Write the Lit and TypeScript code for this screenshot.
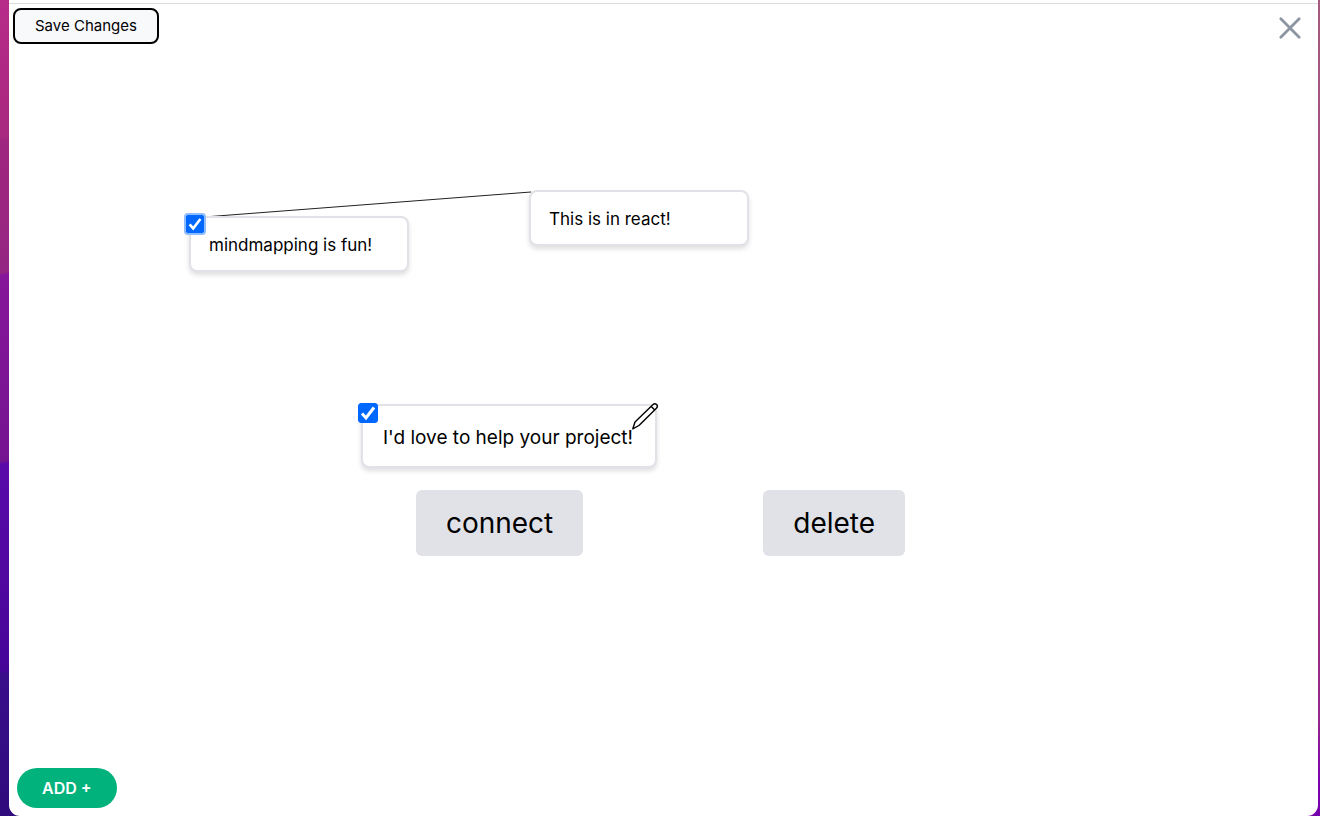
import { LitElement, html, svg, css } from "lit";
import { customElement, property, state } from "lit/decorators.js";
import { styleMap } from "lit/directives/style-map.js";
import { classMap } from "lit/directives/class-map.js";

interface MapNode {
  id: number;
  text: string;
  x: number;
  y: number;
  selected: boolean;
  focused?: boolean;
  large?: boolean;
}

@customElement("map-node")
export class MapNodeCard extends LitElement {
  @property({ attribute: false }) node!: MapNode;

  static styles = css`
    :host {
      display: block;
    }
    .card {
      position: relative;
      box-sizing: border-box;
      min-width: 220px;
      padding: 17px 18px 15px;
      border: 2px solid #e1e2e8;
      border-radius: 8px;
      background: #fff;
      box-shadow: 0 3px 5px rgba(0, 0, 0, 0.13);
      font-size: 17px;
      line-height: 20px;
      color: #000;
      white-space: nowrap;
    }
    .card.large {
      min-width: 296px;
      padding: 20px 20px 16px;
      font-size: 19px;
      line-height: 24px;
    }
    .text {
      margin: 0;
    }
    .tick {
      position: absolute;
      top: -3px;
      left: -5px;
      display: grid;
      width: 18px;
      height: 18px;
    }
    .large .tick {
      width: 20px;
      height: 20px;
    }
    .tick > * {
      grid-area: 1 / 1;
      width: 100%;
      height: 100%;
    }
    .box {
      appearance: none;
      margin: 0;
      border: 1px solid #767676;
      border-radius: 3px;
      background: #fff;
    }
    .box:checked {
      border-color: #0068ff;
      background: #0068ff;
    }
    .box.focused {
      border-radius: 2px;
      box-shadow: 0 0 0 2px #8fbcfb;
    }
    .check {
      pointer-events: none;
    }
    .edit {
      position: absolute;
      top: -4px;
      right: -4px;
      width: 28px;
      height: 28px;
      padding: 0;
      border: 0;
      background: none;
      cursor: pointer;
    }
    .edit svg {
      display: block;
      width: 28px;
      height: 28px;
    }
  `;

  private toggle() {
    this.dispatchEvent(new CustomEvent("toggle-node", { detail: this.node.id }));
  }

  render() {
    const { text, selected, focused, large } = this.node;
    return html`
      <div class=${classMap({ card: true, large: !!large })}>
        <p class="text">${text}</p>
        ${selected
          ? html`<label class="tick">
              <input
                class=${classMap({ box: true, focused: !!focused })}
                type="checkbox"
                aria-label=${`Select ${text}`}
                .checked=${selected}
                @change=${this.toggle}
              />
              <svg class="check" viewBox="0 0 20 20" fill="none" aria-hidden="true">
                <path d="M4 10.5 8 15 16 4.5" stroke="#fff" stroke-width="3" />
              </svg>
            </label>`
          : null}
        ${large
          ? html`<button class="edit" aria-label="Edit">
              <svg viewBox="0 0 28 28" fill="#fff" stroke="#000" stroke-width="1.4" stroke-linejoin="round">
                <path d="M1.800 26.800 4 20 21.800 2.800c1.200-1.100 2.800-1.100 3.800-.2 1 1 .9 2.600-.2 3.700L8 23.500Z" />
                <path d="M20.200 4.400 23.800 7.900" fill="none" />
              </svg>
            </button>`
          : null}
      </div>
    `;
  }
}

@customElement("app-root")
export class AppRoot extends LitElement {
  @state() private nodes: MapNode[] = [
    { id: 1, text: "mindmapping is fun!", x: 180, y: 168, selected: true, focused: true },
    { id: 2, text: "This is in react!", x: 520, y: 142, selected: false },
    { id: 3, text: "I'd love to help your project!", x: 352, y: 356, selected: true, large: true },
  ];
  private links: [number, number][] = [[1, 2]];

  static styles = css`
    :host {
      display: block;
      box-sizing: border-box;
      min-height: 100vh;
      font-family: Inter, "Liberation Sans", sans-serif;
      background:
        linear-gradient(#a45b80, #a03a7c 60%, #94278a 88%, #7a00b0 96%, #7600ac) right / 2px 100% no-repeat,
        linear-gradient(
          173deg,
          #b72b89 0,
          #a8287f 137px,
          #a0267f 138px,
          #942582 271px,
          #86169a 273px,
          #751491 458px,
          #5a0aa9 461px,
          #470598 666px,
          #380e8b 669px,
          #300b7c 100%
        ) left / 20px 100% no-repeat,
        #7600ac;
    }
    .window {
      display: flex;
      flex-direction: column;
      min-height: 100vh;
      margin: 0 2px 0 9px;
      border-radius: 0 0 11px 11px;
      background: #fff;
      overflow: hidden;
    }
    .edge {
      height: 3px;
      border-bottom: 1px solid #dcdcde;
    }
    .toolbar {
      display: flex;
      align-items: flex-start;
      justify-content: space-between;
      padding: 4px 4px 0;
    }
    button {
      font-family: inherit;
      color: #000;
      cursor: pointer;
    }
    .save {
      height: 36px;
      padding: 0 20px;
      border: 2px solid #000;
      border-radius: 8px;
      background: #f8f9fb;
      font-size: 15px;
      line-height: 20px;
    }
    .close {
      width: 40px;
      height: 40px;
      margin-right: 4px;
      padding: 8px;
      border: 0;
      background: none;
    }
    .close svg {
      display: block;
      width: 24px;
      height: 24px;
    }
    .canvas {
      position: relative;
      flex: 1;
    }
    .links {
      position: absolute;
      inset: 0;
      width: 100%;
      height: 100%;
    }
    map-node {
      position: absolute;
    }
    .actions {
      position: relative;
      display: flex;
      justify-content: center;
      gap: 180px;
      padding: 442px 6px 0 0;
    }
    .action {
      height: 66px;
      padding: 0 30px;
      border: 0;
      border-radius: 6px;
      background: #e1e2e8;
      font-size: 28px;
      line-height: 36px;
    }
    .footer {
      padding: 8px;
    }
    .add {
      display: block;
      height: 40px;
      padding: 0 25px;
      border: 0;
      border-radius: 20px;
      background: #02b27c;
      color: #fff;
      font-size: 16px;
      font-weight: 600;
      line-height: 20px;
    }
  `;

  private toggle(e: CustomEvent<number>) {
    this.nodes = this.nodes.map((n) => (n.id === e.detail ? { ...n, selected: !n.selected } : n));
  }

  private find(id: number) {
    return this.nodes.find((n) => n.id === id)!;
  }

  render() {
    return html`
      <main class="window">
        <div class="edge"></div>
        <header class="toolbar">
          <button class="save">Save Changes</button>
          <button class="close" aria-label="Close">
            <svg viewBox="0 0 24 24" stroke="#8d95a3" stroke-width="2.8" stroke-linecap="round">
              <path d="M2.800 2.800 21.200 21.200M21.200 2.800 2.800 21.200" />
            </svg>
          </button>
        </header>
        <section class="canvas">
          <svg class="links" aria-hidden="true">
            ${this.links.map(([from, to]) => {
              const a = this.find(from);
              const b = this.find(to);
              return svg`<line x1=${a.x + 2} y1=${a.y + 2} x2=${b.x + 2} y2=${b.y + 2} stroke="#222" />`;
            })}
          </svg>
          <div class="actions">
            <button class="action">connect</button>
            <button class="action">delete</button>
          </div>
          ${this.nodes.map(
            (n) => html`<map-node
              .node=${n}
              style=${styleMap({ left: `${n.x}px`, top: `${n.y}px` })}
              @toggle-node=${this.toggle}
            ></map-node>`
          )}
        </section>
        <footer class="footer">
          <button class="add">ADD +</button>
        </footer>
      </main>
    `;
  }
}
